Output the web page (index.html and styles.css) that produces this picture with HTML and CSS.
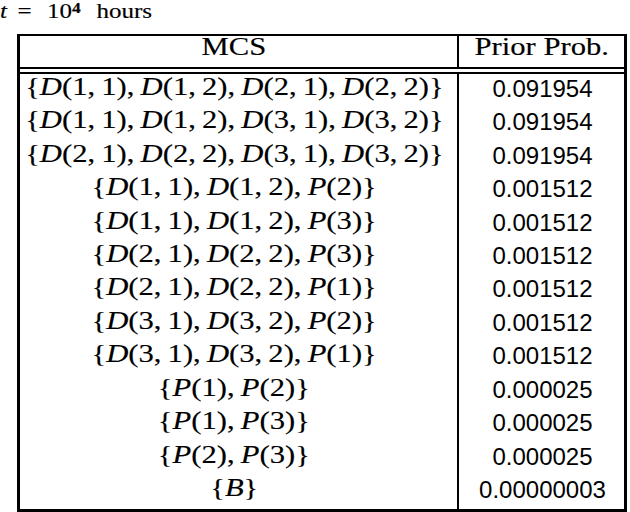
FILE: index.html
```html
<!DOCTYPE html>
<html>
<head>
<meta charset="utf-8">
<link rel="stylesheet" href="styles.css">
</head>
<body>
<div class="title">
  <div class="title-inner"><i class="t">t</i><span class="eq">=</span><span class="num">10<sup class="exp">4</sup></span><span class="unit">hours</span></div>
</div>
<div class="tbl">
  <div class="hd hd-l"><span class="s">MCS</span></div>
  <div class="hd hd-r"><span class="s">Prior Prob.</span></div>
  <div class="rule"></div>

  <div class="c-l"><span class="s">{<i>D</i>(1,&thinsp;1),&thinsp;<i>D</i>(1,&thinsp;2),&thinsp;<i>D</i>(2,&thinsp;1),&thinsp;<i>D</i>(2,&thinsp;2)}</span></div>
  <div class="c-r">0.091954</div>
  <div class="c-l"><span class="s">{<i>D</i>(1,&thinsp;1),&thinsp;<i>D</i>(1,&thinsp;2),&thinsp;<i>D</i>(3,&thinsp;1),&thinsp;<i>D</i>(3,&thinsp;2)}</span></div>
  <div class="c-r">0.091954</div>
  <div class="c-l"><span class="s">{<i>D</i>(2,&thinsp;1),&thinsp;<i>D</i>(2,&thinsp;2),&thinsp;<i>D</i>(3,&thinsp;1),&thinsp;<i>D</i>(3,&thinsp;2)}</span></div>
  <div class="c-r">0.091954</div>
  <div class="c-l"><span class="s">{<i>D</i>(1,&thinsp;1),&thinsp;<i>D</i>(1,&thinsp;2),&thinsp;<i>P</i>(2)}</span></div>
  <div class="c-r">0.001512</div>
  <div class="c-l"><span class="s">{<i>D</i>(1,&thinsp;1),&thinsp;<i>D</i>(1,&thinsp;2),&thinsp;<i>P</i>(3)}</span></div>
  <div class="c-r">0.001512</div>
  <div class="c-l"><span class="s">{<i>D</i>(2,&thinsp;1),&thinsp;<i>D</i>(2,&thinsp;2),&thinsp;<i>P</i>(3)}</span></div>
  <div class="c-r">0.001512</div>
  <div class="c-l"><span class="s">{<i>D</i>(2,&thinsp;1),&thinsp;<i>D</i>(2,&thinsp;2),&thinsp;<i>P</i>(1)}</span></div>
  <div class="c-r">0.001512</div>
  <div class="c-l"><span class="s">{<i>D</i>(3,&thinsp;1),&thinsp;<i>D</i>(3,&thinsp;2),&thinsp;<i>P</i>(2)}</span></div>
  <div class="c-r">0.001512</div>
  <div class="c-l"><span class="s">{<i>D</i>(3,&thinsp;1),&thinsp;<i>D</i>(3,&thinsp;2),&thinsp;<i>P</i>(1)}</span></div>
  <div class="c-r">0.001512</div>
  <div class="c-l"><span class="s">{<i>P</i>(1),&thinsp;<i>P</i>(2)}</span></div>
  <div class="c-r">0.000025</div>
  <div class="c-l"><span class="s">{<i>P</i>(1),&thinsp;<i>P</i>(3)}</span></div>
  <div class="c-r">0.000025</div>
  <div class="c-l"><span class="s">{<i>P</i>(2),&thinsp;<i>P</i>(3)}</span></div>
  <div class="c-r">0.000025</div>
  <div class="c-l"><span class="s">{<i>B</i>}</span></div>
  <div class="c-r">0.00000003</div>
</div>
</body>
</html>
```
FILE: styles.css
```css
html, body {
  margin: 0;
  padding: 0;
  background: #fff;
  color: #000;
}
body {
  font-family: "Liberation Serif", "Times New Roman", serif;
  overflow: hidden;
}
.title {
  height: 34px;
  font-size: 20px;
  line-height: normal;
  white-space: nowrap;
  -webkit-text-stroke: 0.15px #000;
}
.title-inner {
  display: inline-block;
  transform: scaleX(1.25);
  transform-origin: 0 0;
}
.t {
  font-style: italic;
}
.eq {
  margin-left: 8.4px;
}
.num {
  margin-left: 12.4px;
}
.exp {
  font-size: 14px;
  font-weight: bold;
  vertical-align: 5px;
  line-height: 0;
}
.unit {
  margin-left: 12.6px;
}
.tbl {
  box-sizing: border-box;
  margin-left: 17px;
  width: 610px;
  height: 478px;
  border: 3px solid #000;
  border-top-width: 2px;
  display: grid;
  grid-template-columns: 439px 1fr;
  grid-template-rows: 31px 7px repeat(13, 1fr);
  font-size: 24.5px;
  line-height: 24px;
}
.s {
  display: inline-block;
  transform: scaleX(1.25);
  white-space: nowrap;
  -webkit-text-stroke: 0.15px #000;
}
.hd {
  display: flex;
  justify-content: center;
  align-items: flex-start;
  line-height: 22px;
}
.hd-l, .c-l {
  border-right: 2px solid #000;
  padding-right: 9px;
}
.rule {
  grid-column: 1 / -1;
  border-top: 2px solid #000;
  border-bottom: 2px solid #000;
}
.c-l {
  display: flex;
  justify-content: center;
  align-items: center;
  padding-bottom: 8px;
  box-sizing: border-box;
}
.c-r {
  display: flex;
  justify-content: center;
  align-items: center;
  padding-bottom: 4px;
  box-sizing: border-box;
  font-family: "Liberation Sans", Arial, sans-serif;
  font-size: 24px;
  padding-left: 2px;
}
```
